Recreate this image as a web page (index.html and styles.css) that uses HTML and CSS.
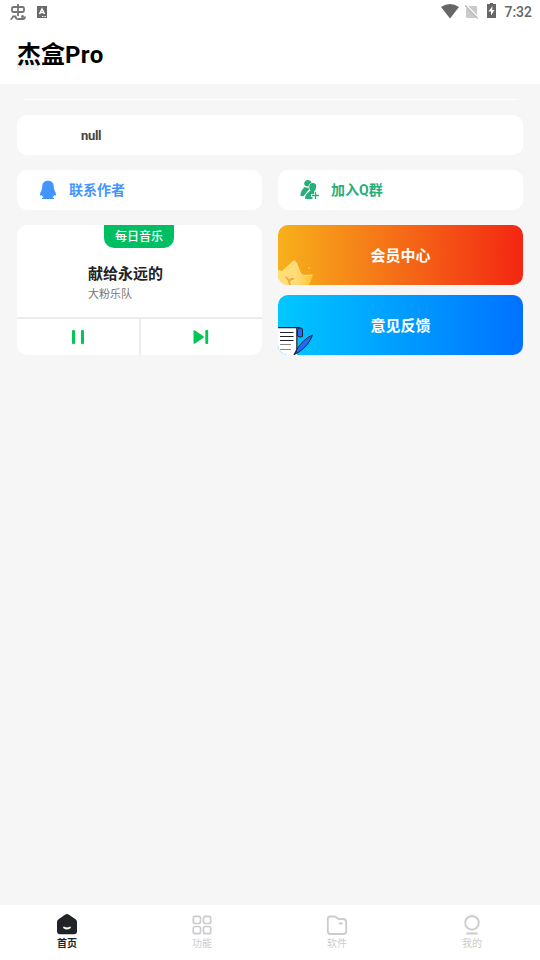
FILE: index.html
```html
<!DOCTYPE html>
<html lang="zh-CN">
<head>
<meta charset="utf-8">
<title>杰盒Pro</title>
<link rel="stylesheet" href="styles.css">
</head>
<body>
<header class="status">
  <svg class="bug" width="17" height="17" viewBox="0 0 17 17" fill="none" stroke="#747474" stroke-width="1.800"><path d="M8 0V12M3.500 3H12.500Q14 3 14 4.500V6.500Q14 8 12.500 8H3.500Q2 8 2 6.500V4.500Q2 3 3.500 3ZM.5 15.500Q2 15 3 12.500H5.500Q6 15.500 9 15H13Q15 15 15 12.500"/><circle cx="12.500" cy="12.500" r="1.500" fill="#747474" stroke="none"/></svg>
  <svg class="abox" width="10" height="12" viewBox="0 0 10 12"><path fill="#696969" d="M0 0H10V12H0Z"/><path d="M2.500 8L5 3L7.500 8M3.500 6.500H6.500" fill="none" stroke="#fff" stroke-width="1.500"/><path d="M5 10.500H9" stroke="#fff" stroke-dasharray="1 .6"/></svg>
  <div class="system">
    <svg class="wifi" width="18" height="15" viewBox="0 0 18 15"><path fill="#666" d="M0 3Q9-3 18 3L9 14.500Z"/></svg>
    <svg class="sim" width="13" height="14" viewBox="0 0 13 14"><path fill="#c9c9c9" d="M4 1H11Q12 1 12 2V13H2Q1 13 1 12V4Z"/><path d="M1 0L14 13" stroke="#fff" stroke-width="1.500"/><path d="M0 .5L13 13.500" stroke="#bbb" stroke-width="1.200"/></svg>
    <svg class="battery" width="9" height="15" viewBox="0 0 9 15"><path fill="#666" d="M3 0H6V1H9V15H0V1H3Z"/><path fill="#fff" d="M5.500 3L1.500 8.500H4V12.500L7.500 7H5.200Z"/></svg>
    <span class="time">7:32</span>
  </div>
</header>
<h1 class="title"><span class="mark">杰</span>盒<span class="latin">Pro</span></h1>
<main class="content">
  <div class="rule"></div>
  <section class="card notice">null</section>
  <div class="grid">
    <a class="card link author">
      <svg width="18" height="20" viewBox="0 0 18 20"><path fill="#4294ff" d="M9 .7C5 .7 3.200 3 3.200 7Q3.200 9 2.200 11Q.5 13 1 16L2.500 15L4.500 17.500L3 18V19H15V18L13.500 17.500L15.500 15L17 16Q17.500 13 15.800 11Q14.800 9 14.800 7C14.800 3 13 .7 9 .7Z"/></svg>
      <span>联系作者</span>
    </a>
    <a class="card link group">
      <svg width="20" height="20" viewBox="0 0 20 20" fill="#27ae79"><path d="M8 0Q11 0 11.600 2.500Q9 3.500 8.300 6.500Q4 6.500 4.200 3.500Q4.500 0 8 0Z"/><path d="M4.500 7Q7 8 8.500 7.500L9 9.500L3.500 16.300L.5 16Q0 13 1.500 11Q3 8.500 4.500 7Z"/><path d="M9.200 7Q9.200 3 13 3Q16.500 3 16.200 7Q16 10 14 11.500V14H11V17H12.500V19H5Q4.500 16 7 13.500L10.500 10.500Q9.200 9 9.200 7Z"/><path d="M15.500 12V19M12 15.500H19" stroke="#27ae79" stroke-width="1.300"/></svg>
      <span>加入Q群</span>
    </a>
    <section class="card music">
      <div class="badge">每日音乐</div>
      <div class="song">献给永远的</div>
      <div class="artist">大粉乐队</div>
      <div class="controls">
        <div><svg width="16" height="16" viewBox="0 0 16 16"><path d="M3.500 2.300V13.700M12.500 2.300V13.700" stroke="#00c853" stroke-width="3" stroke-linecap="round"/></svg></div>
        <div><svg class="next" width="16" height="16" viewBox="0 0 16 16" fill="#00c853"><path d="M.5 2.200Q.5 .7 2 1.500L10.500 7.200Q11.500 8 10.500 8.800L2 14.500Q.5 15.300 .5 13.800Z"/><rect x="12.300" y="1" width="2.900" height="14" rx="1"/></svg></div>
      </div>
    </section>
    <div class="actions">
      <a class="action vip">
        <svg class="art" width="36" height="25" viewBox="0 0 36 25"><defs><linearGradient id="crown"><stop stop-color="#ffdf73"/><stop offset=".5" stop-color="#ffdc78"/><stop offset="1" stop-color="#ffc42d"/></linearGradient></defs><path fill="url(#crown)" d="M0 10.500L4 11.500L14.500 1.500Q16.500 0 18 2.500L23 14Q24 16 27 15.500L33 14.500Q35.500 14.500 34.500 16.500L31 25H0Z"/><path d="M0 10.500L4 11.500L15 1.500Q17 0 18 2.500L23 14Q24 16 34.500 15" fill="none" stroke="#ffeaa0" stroke-width=".8"/><path d="M7.500 17.500Q9 17 11 21.500Q13 18 16 19M11 21.500L12 25" fill="none" stroke="#eda940" stroke-width="1.800"/><circle cx="31" cy="8" r="1.100" fill="#ffc447"/><circle cx="20" cy="3" r=".6" fill="#ffc447"/><circle cx="29" cy="4" r=".5" fill="#ffc447"/></svg>
        <span>会员中心</span>
      </a>
      <a class="action feedback">
        <svg class="art" width="36" height="28" viewBox="0 0 36 28"><path fill="#fff" d="M0 1H19V28H8Q2 26 0 21Z"/><path d="M0 .7H22M18.800 1V25" stroke="#20242a" stroke-width="1.200"/><path fill="#1d6bff" stroke="#20242a" d="M19.500 3Q20 .8 22 1Q24.500 .5 24.500 3V9.500Q22 11 19.500 9Z"/><path stroke="#20242a" stroke-width="1.200" d="M2 5.500H15.500M2 9.500H15.500M2 13.500H15.500"/><path stroke="#888" stroke-width="1.200" d="M2 17.500H13M2 22.500H13"/><path fill="#1d6bff" stroke="#18263c" d="M34.500 8Q25 12 18.500 23L17 27L21 25Q31 18 34.500 8Z"/><path d="M16 28L18.500 24" stroke="#18263c" stroke-width="1.500"/></svg>
        <span>意见反馈</span>
      </a>
    </div>
  </div>
</main>
<nav class="tabs">
  <a class="tab active"><svg width="22" height="22" viewBox="0 0 22 22"><path fill="#222326" d="M9 .8Q11-.6 13 .8L19.500 5.300Q21 6.300 21 8V17.300Q21 20.300 18 20.300H4Q1 20.300 1 17.300V8Q1 6.300 2.500 5.300Z"/><path d="M8 13.500Q11 15.500 14 13.500" fill="none" stroke="#fff" stroke-width="1.800" stroke-linecap="round"/></svg><span>首页</span></a>
  <a class="tab"><svg width="22" height="22" viewBox="0 0 22 22" fill="none" stroke="#ccc" stroke-width="1.700"><rect x="2.300" y="2.300" width="7.200" height="7.200" rx="2"/><rect x="12.500" y="2.300" width="7.200" height="7.200" rx="2"/><rect x="2.300" y="12.500" width="7.200" height="7.200" rx="2"/><rect x="12.500" y="12.500" width="7.200" height="7.200" rx="2"/></svg><span>功能</span></a>
  <a class="tab"><svg width="22" height="22" viewBox="0 0 22 22" fill="none" stroke="#ccc" stroke-width="1.800" stroke-linecap="round"><path d="M4 2.500H8Q10 2.500 11 4Q12 5 14 5H17Q20.200 5 20.200 8V17Q20.200 20 17 20H4.500Q1.800 20 1.800 17V5Q1.800 2.500 4 2.500ZM13.500 9.500H16"/></svg><span>软件</span></a>
  <a class="tab"><svg width="22" height="22" viewBox="0 0 22 22" fill="none" stroke="#ccc" stroke-width="1.800" stroke-linecap="round"><circle cx="11" cy="8.800" r="6.800"/><path d="M6 19.500H16"/></svg><span>我的</span></a>
</nav>
</body>
</html>
```
FILE: styles.css
```css
* { box-sizing: border-box; }
body {
  margin: 0;
  width: 540px;
  height: 960px;
  display: flex;
  flex-direction: column;
  overflow: hidden;
  background: #fff;
  font-family: Roboto, "Noto Sans CJK SC", sans-serif;
}
svg { display: block; flex: none; }
.status { height: 24px; display: flex; align-items: flex-start; padding: 4px 8px 0 10px; }
.abox { margin: 2px 0 0 10px; }
.system { margin-left: auto; display: flex; }
.sim { margin: 1px 0 0 6px; }
.battery { margin: -1px 0 0 9px; }
.time { margin-left: 8px; font-size: 14px; line-height: 17px; font-weight: 500; color: #666; }
.title { margin: 0; height: 60px; padding: 1px 0 0 17px; font-size: 24px; line-height: 60px; font-weight: 700; color: #000; }
.mark { padding-bottom: 1px; background: linear-gradient(#f0f0f0, #f0f0f0) 0 100% / 22px 10px no-repeat; }
.latin { letter-spacing: .4px; }
.content { flex: 1; padding: 15px 17px 0; background: #f6f6f6; }
.rule { height: 1px; margin: 0 6px 15px 7px; background: #fff; }
.card { background: #fff; border-radius: 10px; overflow: hidden; }
.notice { height: 40px; padding-left: 64px; font-size: 13px; line-height: 41px; font-weight: 700; letter-spacing: -.3px; color: #444; }
.grid { display: grid; grid-template-columns: 245px 245px; gap: 15px 16px; margin-top: 15px; }
.link { height: 40px; display: flex; align-items: center; padding-left: 22px; font-size: 14px; line-height: 40px; font-weight: 700; }
.link span { margin-left: 12px; }
.author { color: #4294ff; }
.group { color: #27ae79; }
.group span { margin-left: 11px; }
.music { height: 130px; display: flex; flex-direction: column; }
.badge { width: 70px; height: 23px; margin-left: 87px; border-radius: 0 0 10px 10px; background: #00bf63; color: #fff; text-align: center; font-size: 12px; line-height: 24px; font-weight: 500; }
.song { margin: 15px 0 0 71px; font-size: 15px; line-height: 23px; font-weight: 700; color: #222; }
.artist { margin-left: 71px; font-size: 11px; line-height: 18px; color: #757575; }
.controls { flex: none; height: 38px; margin-top: auto; display: grid; grid-template-columns: 122px 121px; gap: 2px; padding-top: 2px; background: #ececec; }
.controls div { display: grid; place-items: center; background: #fff; }
.next { margin-right: 2px; }
.actions { display: grid; gap: 10px; grid-template-rows: 60px 60px; }
.action { position: relative; overflow: hidden; border-radius: 10px; color: #fff; text-align: center; font-size: 15px; line-height: 62px; font-weight: 700; }
.vip { background: linear-gradient(90deg, #f7b11b, #f32612); }
.feedback { background: linear-gradient(90deg, #00c8ff, #0072ff); }
.art { position: absolute; left: 0; bottom: 0; }
.tabs { height: 55px; display: grid; grid-template-columns: repeat(4, 1fr); background: #fff; }
.tab { display: flex; flex-direction: column; align-items: center; padding: 9px 1px 0 0; color: #ccc; font-size: 10px; line-height: 16px; }
.active { color: #222326; font-weight: 700; }
```
